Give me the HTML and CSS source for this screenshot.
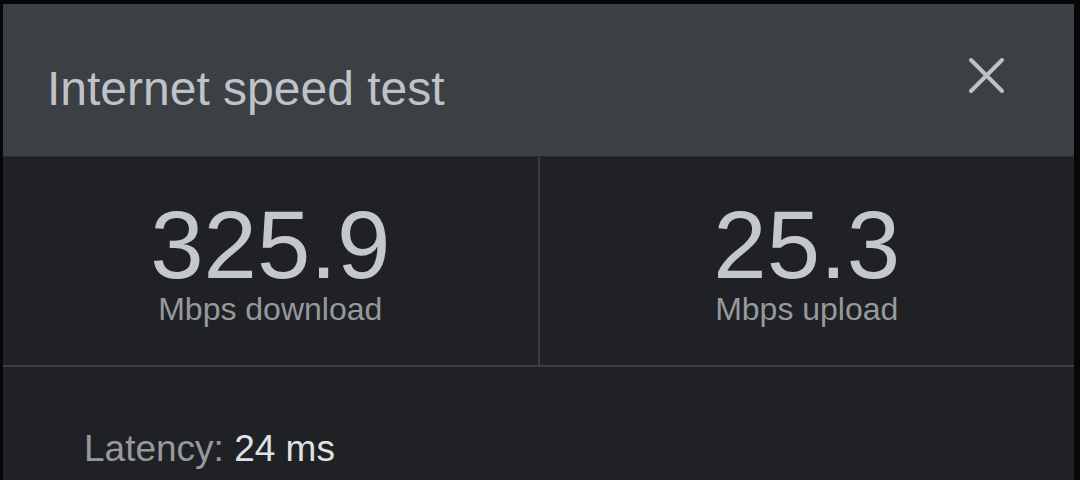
FILE: index.html
```html
<!DOCTYPE html>
<html lang="en">
<head>
<meta charset="utf-8">
<title>Internet speed test</title>
<link rel="stylesheet" href="styles.css">
</head>
<body>
<div class="dialog">
  <div class="header">
    <h1 class="title">Internet speed test</h1>
    <button class="close" aria-label="Close">
      <svg width="37" height="37" viewBox="0 0 37 37"><path d="M3 3 L34 34 M34 3 L3 34" stroke="#bdc1c6" stroke-width="4" stroke-linecap="round" fill="none"/></svg>
    </button>
  </div>
  <div class="stats">
    <div class="stat">
      <div class="value">325.9</div>
      <div class="label">Mbps download</div>
    </div>
    <div class="divider"></div>
    <div class="stat">
      <div class="value">25.3</div>
      <div class="label">Mbps upload</div>
    </div>
  </div>
  <div class="details">
    <div class="latency"><span class="key">Latency:</span> <span class="val">24 ms</span></div>
  </div>
</div>
</body>
</html>
```
FILE: styles.css
```css
html, body {
  margin: 0;
  padding: 0;
  background: #060708;
  overflow: hidden;
  height: 480px;
}
body {
  font-family: "Liberation Sans", Arial, sans-serif;
}
.dialog {
  margin: 4px 6px 0 3px;
  background: #202124;
  height: 600px;
}
.header {
  display: flex;
  justify-content: space-between;
  align-items: flex-start;
  height: 152px;
  background: #3c3f43;
  padding: 0 69px 0 44px;
  box-sizing: border-box;
}
.title {
  margin: 57px 0 0 0;
  font-size: 48px;
  line-height: 56px;
  font-weight: normal;
  color: #bfc3c9;
}
.close {
  margin-top: 53px;
  width: 37px;
  height: 37px;
  padding: 0;
  border: 0;
  background: none;
  display: block;
}
.close svg { display: block; }
.stats {
  display: flex;
  height: 208px;
  border-top: 1px solid #2a2c2f;
  border-bottom: 2px solid #3a3d41;
}
.stat {
  flex: 1;
  display: flex;
  flex-direction: column;
  align-items: center;
  padding-top: 50px;
}
.divider {
  width: 2px;
  background: #3a3d41;
}
.value {
  font-size: 96px;
  line-height: 76px;
  color: #c4c7cc;
}
.label {
  margin-top: 8px;
  font-size: 32px;
  line-height: 36px;
  color: #96999e;
}
.details {
  padding: 61px 0 0 81px;
}
.latency {
  font-size: 37px;
  line-height: 42px;
}
.key { color: #96999e; }
.val { color: #dfe1e4; }
```
